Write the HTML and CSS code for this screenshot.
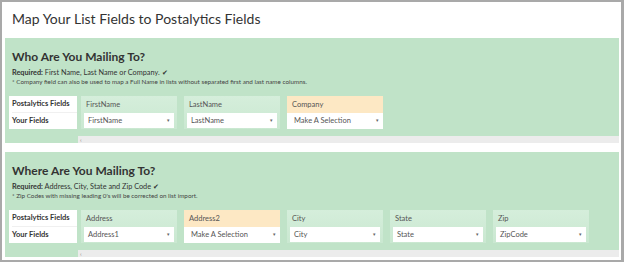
FILE: index.html
```html
<html>
    <head>
        <title>Map Fields</title>
        <meta name="viewport" content="width=device-width, initial-scale=1.0">
        <link rel="stylesheet" href="styles.css">
    </head>
    <body>
        <div class="frame">
            <h1 class="title">Map Your List Fields to Postalytics Fields</h1>

            <div class="section">
                <h2>Who Are You Mailing To?</h2>
                <p class="req"><b>Required:</b> First Name, Last Name or Company. <span class="check">&#10004;</span></p>
                <p class="note">* Company field can also be used to map a Full Name in lists without separated first and last name columns.</p>
                <div class="map">
                    <div class="labels">
                        <div>Postalytics Fields</div>
                        <div>Your Fields</div>
                    </div>
                    <div class="scroller">
                        <div class="cols">
                            <div class="col">
                                <div class="head">FirstName</div>
                                <div class="sel">FirstName<span class="arr">&#9662;</span></div>
                            </div>
                            <div class="col">
                                <div class="head">LastName</div>
                                <div class="sel">LastName<span class="arr">&#9662;</span></div>
                            </div>
                            <div class="col opt">
                                <div class="head">Company</div>
                                <div class="sel">Make A Selection<span class="arr">&#9662;</span></div>
                            </div>
                        </div>
                        <div class="bar">&#8249;</div>
                    </div>
                </div>
            </div>

            <div class="section">
                <h2>Where Are You Mailing To?</h2>
                <p class="req"><b>Required:</b> Address, City, State and Zip Code <span class="check">&#10004;</span></p>
                <p class="note">* Zip Codes with missing leading 0's will be corrected on list import.</p>
                <div class="map">
                    <div class="labels">
                        <div>Postalytics Fields</div>
                        <div>Your Fields</div>
                    </div>
                    <div class="scroller">
                        <div class="cols">
                            <div class="col">
                                <div class="head">Address</div>
                                <div class="sel">Address1<span class="arr">&#9662;</span></div>
                            </div>
                            <div class="col opt">
                                <div class="head">Address2</div>
                                <div class="sel">Make A Selection<span class="arr">&#9662;</span></div>
                            </div>
                            <div class="col">
                                <div class="head">City</div>
                                <div class="sel">City<span class="arr">&#9662;</span></div>
                            </div>
                            <div class="col">
                                <div class="head">State</div>
                                <div class="sel">State<span class="arr">&#9662;</span></div>
                            </div>
                            <div class="col">
                                <div class="head">Zip</div>
                                <div class="sel">ZipCode<span class="arr">&#9662;</span></div>
                            </div>
                        </div>
                        <div class="bar">&#8249;</div>
                    </div>
                </div>
            </div>
        </div>
    </body>
</html>
```

FILE: styles.css
```css
body {margin:0;background:#fff;color:#333;font-family:Lato, "Open Sans", sans-serif;}
.frame {width:624px;height:262px;box-sizing:border-box;border:2px solid #a9a9a9;border-right-width:3px;padding:0 2px 0 3px;}
.title {margin:0;height:36px;line-height:33px;font-size:14px;font-weight:400;padding-left:7px;color:#333;}
.section {background:#c0e3c8;height:105px;margin-bottom:9px;display:flex;flex-direction:column;}
.section h2 {margin:0;padding:10px 0 0 7px;font-size:12px;font-weight:700;line-height:17px;color:#333;}
.req {margin:0;padding-left:7px;font-size:7.3px;line-height:11px;margin-top:2px;}
.req b {font-weight:700;}
.check {font-size:7px;}
.note {margin:0;padding-left:7px;font-size:6.3px;line-height:8px;color:#444;}
.map {display:flex;margin-top:auto;}
.labels {width:68px;height:33px;margin:0 1px 7px 4px;background:#fff;font-size:7.5px;font-weight:700;padding:0 0 0 3px;box-sizing:border-box;white-space:nowrap;}
.labels div {height:16px;line-height:16px;}
.labels div:first-child {border-bottom:1px solid #f0f0f0;}
.scroller {flex:1;display:flex;flex-direction:column;}
.cols {display:flex;gap:7px;padding-left:3px;height:33px;margin-bottom:7px;}
.col {width:96px;background:linear-gradient(#d5eedb, #cae8d1);padding:0 3px 1px;box-sizing:border-box;display:flex;flex-direction:column;}
.head {height:17px;line-height:17px;font-size:7.5px;padding-left:2px;color:#555;}
.sel {flex:1;background:#fff;font-size:7.5px;line-height:15px;padding-left:4px;color:#555;position:relative;}
.arr {position:absolute;right:4px;top:0;font-size:5px;color:#666;}
.opt {background:#fff;padding:0;}
.opt .head {background:#fde8c4;padding-left:5px;}
.opt .sel {padding-left:7px;}
.bar {height:7px;background:#ececec;font-size:6px;line-height:7px;padding-left:2px;color:#888;}
```
